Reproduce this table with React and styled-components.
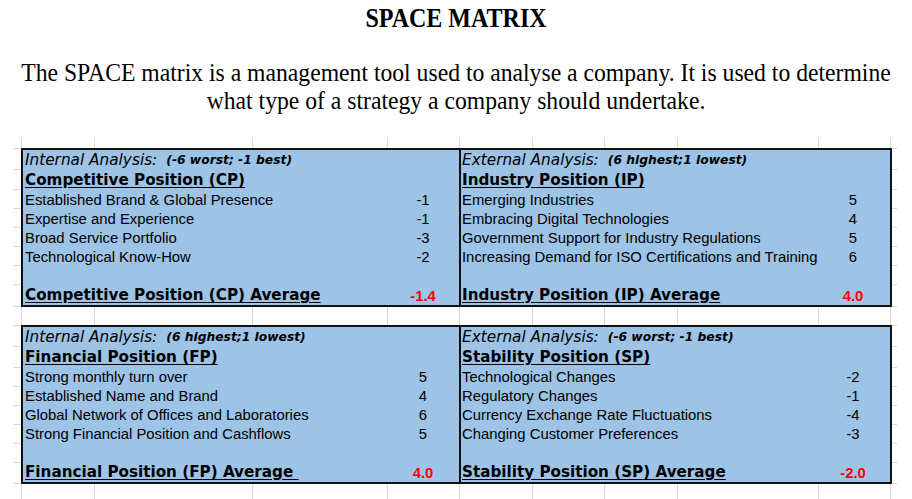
import React from "react";
import styled, { createGlobalStyle } from "styled-components";

const GlobalStyle = createGlobalStyle`
  html, body {
    margin: 0;
    padding: 0;
    background: #fff;
  }
  body {
    font-family: "Liberation Sans", Arial, sans-serif;
    color: #000;
  }
`;

// Posicoes das linhas de grade (relativas a folha)
const COLS = [8, 81, 239, 374, 446, 519, 591, 664, 805, 877];
const ROWS = [10, 31, 51, 70, 89, 108, 127, 146, 168, 187, 208, 229, 248, 267, 286, 305, 324, 345];
const GRID = "#dadada";

const gridBackground = () => {
  const v = COLS.map(
    (x) => `linear-gradient(${GRID}, ${GRID}) ${x}px 0 / 1px 100% no-repeat`
  );
  const h = ROWS.map(
    (y) => `linear-gradient(${GRID}, ${GRID}) 0 ${y}px / 100% 1px no-repeat`
  );
  return [...v, ...h].join(", ");
};

const Page = styled.div`
  width: 912px;
  height: 499px;
  overflow: hidden;
`;

const Header = styled.header`
  margin: 0 -80px;
  text-align: center;
  font-family: "Liberation Serif", "Times New Roman", serif;
  padding-top: 3px;
  white-space: nowrap;
  transform: scaleX(0.91);
`;

const Title = styled.h1`
  margin: 0;
  font-size: 26.4px;
  line-height: 30px;
  font-weight: bold;
`;

const Intro = styled.p`
  margin: 26px 0 0;
  font-size: 26px;
  line-height: 28px;
`;

const Sheet = styled.div`
  margin: 23px 0 0 13px;
  width: 884px;
  height: 400px;
  padding: 10px 0 0 8px;
  box-sizing: border-box;
  background: ${() => gridBackground()};
`;

const Block = styled.section`
  width: 871px;
  box-sizing: border-box;
  border: 2px solid #111;
  display: grid;
  grid-template-columns: 436px 1fr;
  background: #9dc3e6;
  margin-bottom: 18px;
`;

const Panel = styled.div`
  display: grid;
  grid-template-columns: ${(p) => (p.$right ? "357px 72px" : "364px 72px")};
  grid-template-rows: 20px 20px 19px 19px 19px 19px 19px 20px;
  border-left: ${(p) => (p.$right ? "2px solid #111" : "none")};
  padding-left: ${(p) => (p.$right ? "1px" : "2px")};
`;

const Cell = styled.div`
  display: flex;
  align-items: flex-end;
  white-space: nowrap;
  grid-column: ${(p) => (p.$span ? "1 / span 2" : "auto")};
`;

const Heading = styled(Cell)`
  font-family: "DejaVu Sans", Verdana, sans-serif;
  font-style: italic;
  font-size: 15.3px;
  line-height: 19px;
`;

const Scale = styled.span`
  font-weight: bold;
  font-size: 12.3px;
  margin-left: 9px;
`;

const Section = styled(Cell)`
  font-family: "DejaVu Sans", Verdana, sans-serif;
  font-weight: bold;
  font-size: 15.2px;
  line-height: 19px;
  text-decoration: underline;
  text-underline-offset: 2px;
`;

const Label = styled(Cell)`
  font-size: 14.85px;
  line-height: 17px;
`;

const Value = styled(Cell)`
  justify-content: center;
  font-size: 14.85px;
  line-height: 17px;
  padding-right: 4px;
`;

const Average = styled(Value)`
  color: #ff0000;
  font-weight: bold;
`;

const panels = [
  [
    {
      heading: "Internal Analysis:",
      scale: "(-6 worst; -1 best)",
      title: "Competitive Position (CP)",
      items: [
        ["Established Brand & Global Presence", "-1"],
        ["Expertise and Experience", "-1"],
        ["Broad Service Portfolio", "-3"],
        ["Technological Know-How", "-2"],
      ],
      average: "Competitive Position (CP) Average",
      value: "-1.4",
    },
    {
      heading: "External Analysis:",
      scale: "(6 highest;1 lowest)",
      title: "Industry Position (IP)",
      items: [
        ["Emerging Industries", "5"],
        ["Embracing Digital Technologies", "4"],
        ["Government Support for Industry Regulations", "5"],
        ["Increasing Demand for ISO Certifications and Training", "6"],
      ],
      average: "Industry Position (IP) Average",
      value: "4.0",
    },
  ],
  [
    {
      heading: "Internal Analysis:",
      scale: "(6 highest;1 lowest)",
      title: "Financial Position (FP)",
      items: [
        ["Strong monthly turn over", "5"],
        ["Established Name and Brand", "4"],
        ["Global Network of Offices and Laboratories", "6"],
        ["Strong Financial Position and Cashflows", "5"],
      ],
      average: "Financial Position (FP) Average\u00a0",
      value: "4.0",
    },
    {
      heading: "External Analysis:",
      scale: "(-6 worst; -1 best)",
      title: "Stability Position (SP)",
      items: [
        ["Technological Changes", "-2"],
        ["Regulatory Changes", "-1"],
        ["Currency Exchange Rate Fluctuations", "-4"],
        ["Changing Customer Preferences", "-3"],
      ],
      average: "Stability Position (SP) Average",
      value: "-2.0",
    },
  ],
];

function Factor({ data, right }) {
  return (
    <Panel $right={right}>
      <Heading $span>
        {data.heading}
        <Scale>{data.scale}</Scale>
      </Heading>
      <Section $span>{data.title}</Section>
      {data.items.map(([label, value]) => (
        <React.Fragment key={label}>
          <Label>{label}</Label>
          <Value>{value}</Value>
        </React.Fragment>
      ))}
      <Label />
      <Value />
      <Section>{data.average}</Section>
      <Average>{data.value}</Average>
    </Panel>
  );
}

export default function App() {
  return (
    <Page>
      <GlobalStyle />
      <Header>
        <Title>SPACE MATRIX</Title>
        <Intro>
          The SPACE matrix is a management tool used to analyse a company. It is used to determine
          <br />
          what type of a strategy a company should undertake.
        </Intro>
      </Header>
      <Sheet>
        {panels.map(([left, right], i) => (
          <Block key={i}>
            <Factor data={left} />
            <Factor data={right} right />
          </Block>
        ))}
      </Sheet>
    </Page>
  );
}
